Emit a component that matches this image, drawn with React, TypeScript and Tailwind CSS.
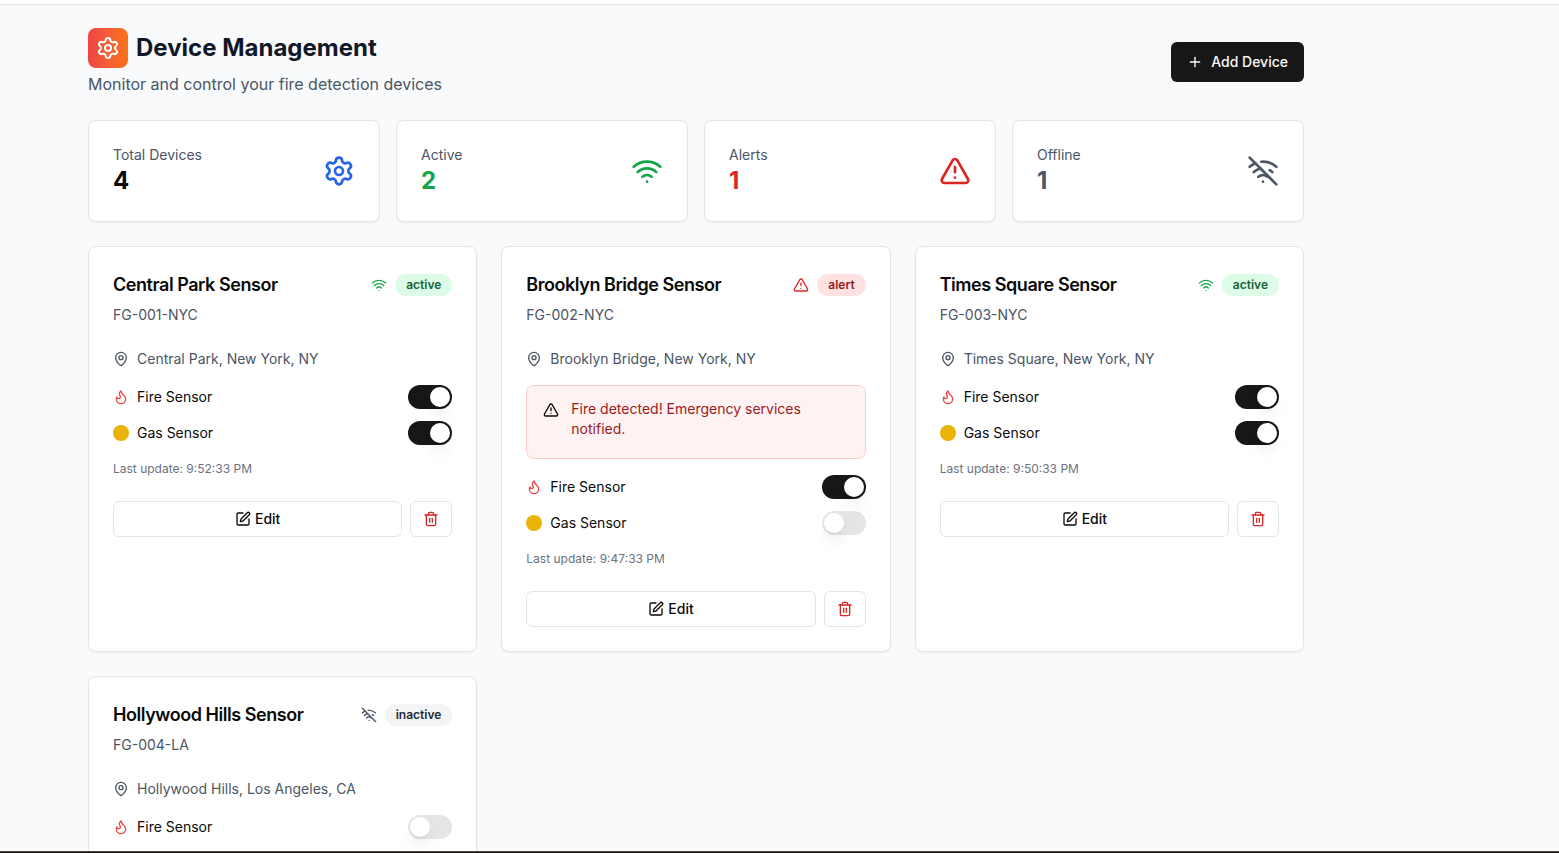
import React, { useState } from "react";
import {
  Flame,
  MapPin,
  Plus,
  Settings,
  SquarePen,
  Trash2,
  TriangleAlert,
  Wifi,
  WifiOff,
  type LucideIcon,
} from "lucide-react";

type DeviceStatus = "active" | "alert" | "inactive";

interface Device {
  id: string;
  name: string;
  location: string;
  status: DeviceStatus;
  fireSensor: boolean;
  gasSensor: boolean;
  lastUpdate: string;
  alertMessage?: string;
}

const initialDevices: Device[] = [
  {
    id: "FG-001-NYC",
    name: "Central Park Sensor",
    location: "Central Park, New York, NY",
    status: "active",
    fireSensor: true,
    gasSensor: true,
    lastUpdate: "9:52:33 PM",
  },
  {
    id: "FG-002-NYC",
    name: "Brooklyn Bridge Sensor",
    location: "Brooklyn Bridge, New York, NY",
    status: "alert",
    fireSensor: true,
    gasSensor: false,
    lastUpdate: "9:47:33 PM",
    alertMessage: "Fire detected! Emergency services notified.",
  },
  {
    id: "FG-003-NYC",
    name: "Times Square Sensor",
    location: "Times Square, New York, NY",
    status: "active",
    fireSensor: true,
    gasSensor: true,
    lastUpdate: "9:50:33 PM",
  },
  {
    id: "FG-004-LA",
    name: "Hollywood Hills Sensor",
    location: "Hollywood Hills, Los Angeles, CA",
    status: "inactive",
    fireSensor: false,
    gasSensor: false,
    lastUpdate: "8:52:33 PM",
  },
];

const statusStyles: Record<
  DeviceStatus,
  { icon: LucideIcon; iconClass: string; badgeClass: string }
> = {
  active: {
    icon: Wifi,
    iconClass: "text-[#16a34a]",
    badgeClass: "bg-[#dcfce7] text-[#166534]",
  },
  alert: {
    icon: TriangleAlert,
    iconClass: "text-[#dc2626]",
    badgeClass: "bg-[#fee2e2] text-[#991b1b]",
  },
  inactive: {
    icon: WifiOff,
    iconClass: "text-[#4b5563]",
    badgeClass: "bg-[#f3f4f6] text-[#1f2937]",
  },
};

interface StatCardProps {
  label: string;
  value: number;
  icon: LucideIcon;
  valueClass: string;
  iconClass: string;
}

const StatCard: React.FC<StatCardProps> = ({
  label,
  value,
  icon: Icon,
  valueClass,
  iconClass,
}) => (
  <div className="flex items-center justify-between rounded-lg border border-[#e5e5e5] bg-white p-6 shadow-xs">
    <div>
      <p className="text-sm text-[#4b5563]">{label}</p>
      <p className={`text-2xl font-bold ${valueClass}`}>{value}</p>
    </div>
    <Icon className={`size-8 ${iconClass}`} />
  </div>
);

interface SensorRowProps {
  id: string;
  label: string;
  icon: React.ReactNode;
  checked: boolean;
  onChange: (checked: boolean) => void;
}

const SensorRow: React.FC<SensorRowProps> = ({
  id,
  label,
  icon,
  checked,
  onChange,
}) => (
  <div className="flex items-center justify-between">
    <div className="flex items-center gap-2">
      {icon}
      <label htmlFor={id} className="text-sm">
        {label}
      </label>
    </div>
    <input
      id={id}
      type="checkbox"
      role="switch"
      checked={checked}
      onChange={(e) => onChange(e.target.checked)}
      className="h-6 w-11 shrink-0 cursor-pointer appearance-none rounded-full bg-[#e5e5e5] p-0.5 before:block before:size-5 before:rounded-full before:bg-white before:shadow-lg before:transition-transform checked:bg-[#171717] checked:before:translate-x-5"
    />
  </div>
);

interface DeviceCardProps {
  device: Device;
  onUpdate: (changes: Partial<Device>) => void;
  onDelete: () => void;
}

const DeviceCard: React.FC<DeviceCardProps> = ({
  device,
  onUpdate,
  onDelete,
}) => {
  const { icon: StatusIcon, iconClass, badgeClass } = statusStyles[device.status];

  return (
    <div className="rounded-lg border border-[#e5e5e5] bg-white p-6 shadow-xs">
      <div className="mb-6 flex flex-col gap-1.5">
        <div className="flex items-center justify-between">
          <h2 className="text-lg font-semibold tracking-tight">
            {device.name}
          </h2>
          <div className="flex items-center gap-2">
            <StatusIcon className={`size-4 ${iconClass}`} />
            <span
              className={`rounded-full border border-transparent px-2.5 py-0.5 text-xs font-semibold ${badgeClass}`}
            >
              {device.status}
            </span>
          </div>
        </div>
        <p className="text-sm text-[#4b5563]">{device.id}</p>
      </div>

      <div className="flex flex-col gap-4">
        <div className="flex items-center gap-2 text-sm text-[#4b5563]">
          <MapPin className="size-4" />
          <span>{device.location}</span>
        </div>

        {device.alertMessage && (
          <div
            role="alert"
            className="flex gap-3 rounded-lg border border-[#fecaca] bg-[#fef2f2] px-4 pt-[13px] pb-[19px]"
          >
            <TriangleAlert className="mt-[3px] size-4 shrink-0" />
            <p className="text-sm text-[#991b1b]">{device.alertMessage}</p>
          </div>
        )}

        <div className="flex flex-col gap-3">
          <SensorRow
            id={`${device.id}-fire`}
            label="Fire Sensor"
            icon={<Flame className="size-4 text-[#ef4444]" />}
            checked={device.fireSensor}
            onChange={(fireSensor) => onUpdate({ fireSensor })}
          />
          <SensorRow
            id={`${device.id}-gas`}
            label="Gas Sensor"
            icon={<div className="size-4 rounded-full bg-[#eab308]" />}
            checked={device.gasSensor}
            onChange={(gasSensor) => onUpdate({ gasSensor })}
          />
        </div>

        <p className="text-xs text-[#6b7280]">
          Last update: {device.lastUpdate}
        </p>

        <div className="flex gap-2 pt-2">
          <button
            type="button"
            className="flex h-9 flex-1 items-center justify-center gap-1 rounded-md border border-[#e5e5e5] bg-white px-3 text-sm font-medium hover:bg-[#f5f5f5]"
          >
            <SquarePen className="size-4" />
            Edit
          </button>
          <button
            type="button"
            aria-label={`Delete ${device.name}`}
            onClick={onDelete}
            className="flex h-9 items-center justify-center rounded-md border border-[#e5e5e5] bg-white px-3 text-[#dc2626] hover:bg-[#f5f5f5]"
          >
            <Trash2 className="size-4" />
          </button>
        </div>
      </div>
    </div>
  );
};

const App: React.FC = () => {
  const [devices, setDevices] = useState<Device[]>(initialDevices);

  const countByStatus = (status: DeviceStatus) =>
    devices.filter((device) => device.status === status).length;

  const updateDevice = (id: string, changes: Partial<Device>) =>
    setDevices((prev) =>
      prev.map((device) =>
        device.id === id ? { ...device, ...changes } : device
      )
    );

  const deleteDevice = (id: string) =>
    setDevices((prev) => prev.filter((device) => device.id !== id));

  return (
    <div className="flex h-screen flex-col bg-[#f9fafb] font-[Inter,sans-serif] text-[#0a0a0a]">
      <div className="h-[5px] shrink-0 border-b border-[#e5e5e5] bg-white" />

      <main className="min-h-0 flex-1 overflow-y-auto [scrollbar-width:none]">
        <div className="ml-14 max-w-7xl px-8 pt-[23px] pb-8">
          <div className="mb-6 flex items-center justify-between">
            <div>
              <div className="flex items-center gap-2">
                <div className="rounded-lg bg-linear-to-r from-[#ef4444] to-[#f97316] p-2">
                  <Settings className="size-6 text-white" />
                </div>
                <h1 className="text-2xl font-bold text-[#111827]">
                  Device Management
                </h1>
              </div>
              <p className="mt-1 text-[#4b5563]">
                Monitor and control your fire detection devices
              </p>
            </div>
            <button
              type="button"
              className="flex h-10 items-center gap-2 rounded-md bg-[#171717] px-4 text-sm font-medium text-[#fafafa] hover:bg-[#2e2e2e]"
            >
              <Plus className="size-4" />
              Add Device
            </button>
          </div>

          <div className="mb-6 grid grid-cols-1 gap-4 md:grid-cols-4">
            <StatCard
              label="Total Devices"
              value={devices.length}
              icon={Settings}
              valueClass="text-[#0a0a0a]"
              iconClass="text-[#2563eb]"
            />
            <StatCard
              label="Active"
              value={countByStatus("active")}
              icon={Wifi}
              valueClass="text-[#16a34a]"
              iconClass="text-[#16a34a]"
            />
            <StatCard
              label="Alerts"
              value={countByStatus("alert")}
              icon={TriangleAlert}
              valueClass="text-[#dc2626]"
              iconClass="text-[#dc2626]"
            />
            <StatCard
              label="Offline"
              value={countByStatus("inactive")}
              icon={WifiOff}
              valueClass="text-[#4b5563]"
              iconClass="text-[#4b5563]"
            />
          </div>

          <div className="grid grid-cols-1 gap-6 md:grid-cols-2 lg:grid-cols-3">
            {devices.map((device) => (
              <DeviceCard
                key={device.id}
                device={device}
                onUpdate={(changes) => updateDevice(device.id, changes)}
                onDelete={() => deleteDevice(device.id)}
              />
            ))}
          </div>
        </div>
      </main>

      <div className="h-0.5 shrink-0 border-t border-[#4a4644] bg-[#1f1815]" />
    </div>
  );
};

export default App;
